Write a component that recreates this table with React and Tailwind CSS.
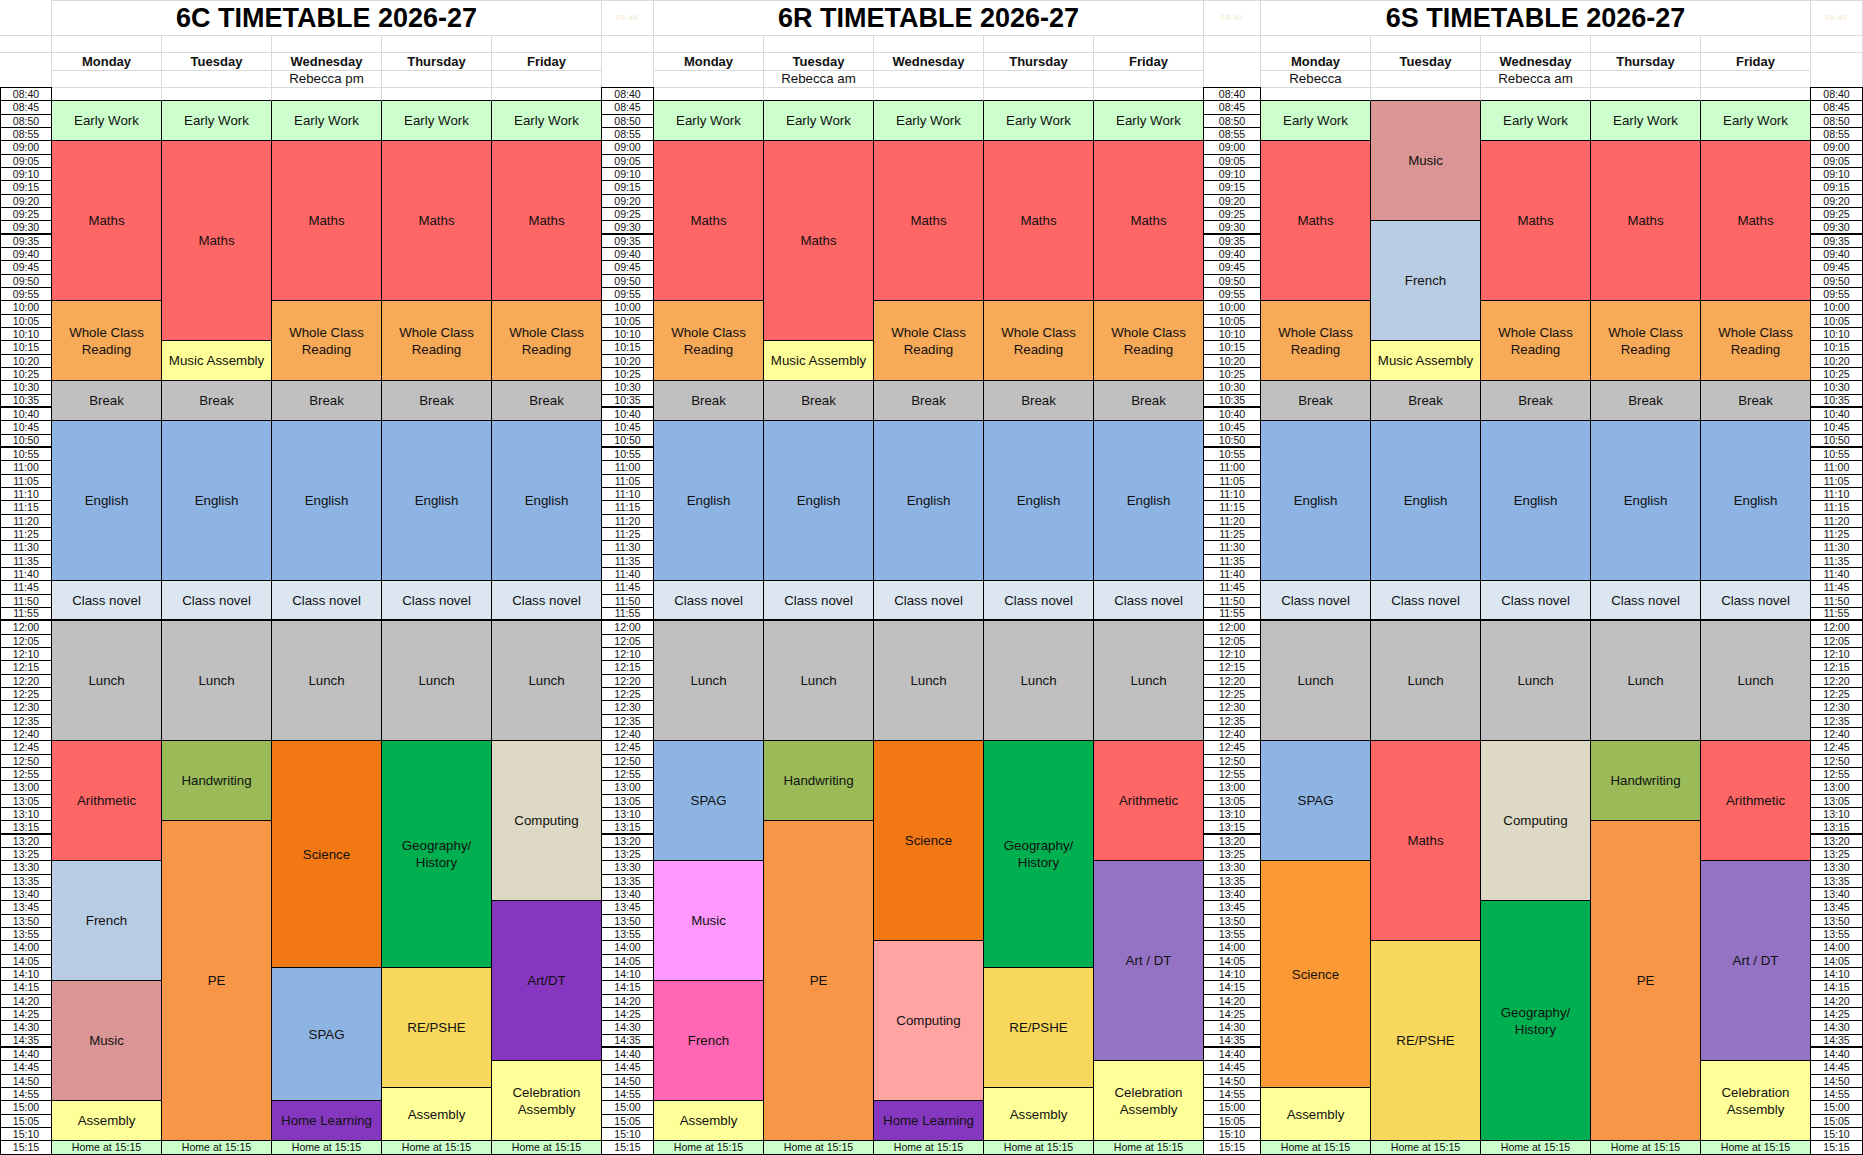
import React from 'react';
import clsx from 'clsx';

// row template shared by every day / time column (08:40 .. 15:15, 80 rows)
const ROWS = 'grid-rows-[13px_repeat(26,14px_13px_13px)_14px]';

const BG = {
  early: 'bg-[#ccffcc]',
  maths: 'bg-[#ff6666]',
  wcr: 'bg-[#f7aa58]',
  massem: 'bg-[#ffff99]',
  brk: 'bg-[#c0c0c0]',
  eng: 'bg-[#8db4e2]',
  novel: 'bg-[#dce6f1]',
  lunch: 'bg-[#c0c0c0]',
  arith: 'bg-[#ff6666]',
  french: 'bg-[#b8cce4]',
  music: 'bg-[#da9694]',
  assem: 'bg-[#ffff99]',
  hand: 'bg-[#9bbb59]',
  pe: 'bg-[#f79646]',
  sci: 'bg-[#f27813]',
  sci2: 'bg-[#fb9a34]',
  spag: 'bg-[#8db4e2]',
  home: 'bg-[#8637c0]',
  geo: 'bg-[#00b050]',
  re: 'bg-[#f7d75c]',
  comp: 'bg-[#ddd9c4]',
  artdt: 'bg-[#8637c0]',
  artdt2: 'bg-[#9473c5]',
  music2: 'bg-[#ff99ff]',
  french2: 'bg-[#ff66b3]',
  comp2: 'bg-[#ffa3a3]',
};

const rest = [
  ['Break', 3, 'brk'],
  ['English', 12, 'eng'],
  ['Class novel', 3, 'novel', true],
  ['Lunch', 9, 'lunch'],
];

const am = [
  ['Early Work', 3, 'early'],
  ['Maths', 12, 'maths'],
  ['Whole Class\nReading', 6, 'wcr'],
  ...rest,
];

const tueAm = [
  ['Early Work', 3, 'early'],
  ['Maths', 15, 'maths'],
  ['Music Assembly', 3, 'massem'],
  ...rest,
];

const sTueAm = [
  ['Music', 9, 'music'],
  ['French', 9, 'french'],
  ['Music Assembly', 3, 'massem'],
  ...rest,
];

const pe = [['Handwriting', 6, 'hand'], ['PE', 24, 'pe']];
const geoPm = [['Geography/\nHistory', 17, 'geo'], ['RE/PSHE', 9, 're'], ['Assembly', 4, 'assem']];

const classes = [
  {
    name: '6C',
    notes: ['', '', 'Rebecca pm', '', ''],
    days: [
      [...am, ['Arithmetic', 9, 'arith'], ['French', 9, 'french'], ['Music', 9, 'music'], ['Assembly', 3, 'assem']],
      [...tueAm, ...pe],
      [...am, ['Science', 17, 'sci'], ['SPAG', 10, 'spag'], ['Home Learning', 3, 'home']],
      [...am, ...geoPm],
      [...am, ['Computing', 12, 'comp'], ['Art/DT', 12, 'artdt'], ['Celebration\nAssembly', 6, 'assem']],
    ],
  },
  {
    name: '6R',
    notes: ['', 'Rebecca am', '', '', ''],
    days: [
      [...am, ['SPAG', 9, 'spag'], ['Music', 9, 'music2'], ['French', 9, 'french2'], ['Assembly', 3, 'assem']],
      [...tueAm, ...pe],
      [...am, ['Science', 15, 'sci'], ['Computing', 12, 'comp2'], ['Home Learning', 3, 'home']],
      [...am, ...geoPm],
      [...am, ['Arithmetic', 9, 'arith'], ['Art / DT', 15, 'artdt2'], ['Celebration\nAssembly', 6, 'assem']],
    ],
  },
  {
    name: '6S',
    notes: ['Rebecca', '', 'Rebecca am', '', ''],
    days: [
      [...am, ['SPAG', 9, 'spag'], ['Science', 17, 'sci2'], ['Assembly', 4, 'assem']],
      [...sTueAm, ['Maths', 15, 'maths'], ['RE/PSHE', 15, 're']],
      [...am, ['Computing', 12, 'comp'], ['Geography/\nHistory', 18, 'geo']],
      [...am, ...pe],
      [...am, ['Arithmetic', 9, 'arith'], ['Art / DT', 15, 'artdt2'], ['Celebration\nAssembly', 6, 'assem']],
    ],
  },
];

const DAYS = ['Monday', 'Tuesday', 'Wednesday', 'Thursday', 'Friday'];

const times = Array.from({ length: 80 }, (_, i) => {
  const m = 520 + i * 5;
  return `${String(Math.floor(m / 60)).padStart(2, '0')}:${String(m % 60).padStart(2, '0')}`;
});

// rows whose lower edge shows up heavier in the sheet
const thick = [10, 23, 26, 39, 55, 71];

const gridLine = 'border-[#dadada]';

const TimeColumn = ({ first }) => (
  <div className={clsx('grid', ROWS, !first && '-ml-px')}>
    {times.map((t, i) => (
      <div
        key={t}
        className={clsx(
          'flex items-center justify-center border-x border-b border-black bg-white text-[10.6px] leading-none text-[#111]',
          i === 0 && '-mt-px border-t',
          thick.includes(i) && 'border-b-2',
        )}
      >
        {t}
      </div>
    ))}
  </div>
);

const DayColumn = ({ blocks }) => (
  <div className={clsx('grid', ROWS)}>
    <div className={clsx('border-r border-b bg-white', gridLine, 'border-b-black')} />
    {blocks.map(([label, span, bg, heavy], i) => (
      <div
        key={i}
        style={{ gridRow: `span ${span}` }}
        className={clsx(
          'flex items-center justify-center whitespace-pre-line border-r border-b border-black px-1 text-center text-[13.3px] leading-[17px] text-[#111]',
          BG[bg],
          heavy && 'border-b-2',
        )}
      >
        {label}
      </div>
    ))}
    <div className="flex items-center justify-center border-r border-b border-black bg-[#ccffcc] text-[10.6px] leading-none text-[#111]">
      Home at 15:15
    </div>
  </div>
);

const Scribble = () => (
  <div className={clsx('flex items-center justify-center border-t border-r border-b', gridLine)}>
    <span className="text-[7px] tracking-[1px] text-[#f1e4c4]">08:40</span>
  </div>
);

export default function App() {
  return (
    <div className="h-[1155px] w-[1863px] overflow-hidden bg-white font-['Liberation_Sans',Arial,sans-serif] text-black">
      <div className="grid grid-cols-[52px_repeat(5,110px)_52px_repeat(5,110px)_57px_repeat(5,110px)_52px] grid-rows-[36px_17px_18px_17px_1067px]">
        {/* title row */}
        <div className={clsx('border-r border-b', gridLine)} />
        {classes.map((c, i) => (
          <React.Fragment key={c.name}>
            {i > 0 && <Scribble />}
            <div className={clsx('col-span-5 flex items-center justify-center border-t border-r border-b text-[27px] font-bold', gridLine)}>
              {c.name} TIMETABLE 2026-27
            </div>
          </React.Fragment>
        ))}
        <Scribble />

        {/* blank row */}
        {Array.from({ length: 19 }, (_, i) => (
          <div key={i} className={clsx('border-r border-b', gridLine)} />
        ))}

        {/* day names, time header cells span into the notes row */}
        <div className={clsx('row-span-2 border-r', gridLine)} />
        {classes.map((c) => (
          <React.Fragment key={c.name}>
            {DAYS.map((d) => (
              <div key={d} className={clsx('flex items-center justify-center border-r border-b text-[13px] font-bold text-[#111]', gridLine)}>
                {d}
              </div>
            ))}
            <div className={clsx('row-span-2 border-r', gridLine)} />
          </React.Fragment>
        ))}

        {/* notes row */}
        {classes.map((c) =>
          c.notes.map((n, i) => (
            <div key={c.name + i} className={clsx('flex items-center justify-center border-r border-b text-[13.3px] text-[#111]', gridLine)}>
              {n}
            </div>
          )),
        )}

        {/* timetable body */}
        <TimeColumn first />
        {classes.map((c) => (
          <React.Fragment key={c.name}>
            {c.days.map((blocks, i) => (
              <DayColumn key={i} blocks={blocks} />
            ))}
            <TimeColumn />
          </React.Fragment>
        ))}
      </div>
    </div>
  );
}
